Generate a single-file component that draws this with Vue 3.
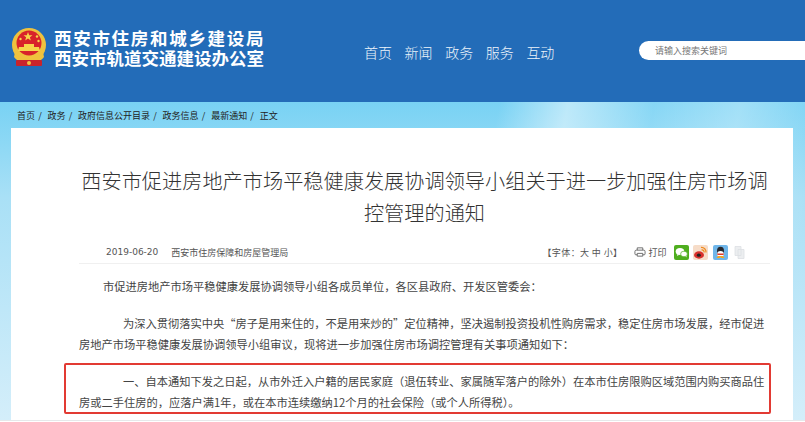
<template>
  <div class="page">
    <header class="top">
      <div class="brand">
        <svg class="emblem" viewBox="0 0 36 40" width="36" height="40">
          <circle cx="18" cy="17" r="17" fill="#efc23e" />
          <circle cx="18" cy="15" r="12.5" fill="#d8232a" />
          <path d="M17 4l1.2 3.2 3.3.1-2.6 2 .9 3.2-2.8-1.9-2.8 1.9.9-3.2-2.6-2 3.3-.1z" fill="#f7d54a" />
          <circle cx="9.5" cy="11" r="1.2" fill="#f7d54a" />
          <circle cx="26" cy="8.5" r="1.2" fill="#f7d54a" />
          <circle cx="27.5" cy="13" r="1.2" fill="#f7d54a" />
          <path d="M8 19h20l1 4H7z" fill="#f7d54a" />
          <path d="M13 19v-3h10v3z" fill="#f7d54a" />
          <path d="M4 24c3 5 8 7 14 7s11-2 14-7l1 5c-3 4-9 6-15 6s-12-2-15-6z" fill="#efc23e" />
          <rect x="5" y="32" width="26" height="6" rx="1" fill="#c9232b" />
          <circle cx="18" cy="35" r="2" fill="#efc23e" />
        </svg>
        <div class="brand-name">
          <div class="name-a">西安市住房和城乡建设局</div>
          <div class="name-b">西安市轨道交通建设办公室</div>
        </div>
      </div>
      <nav class="nav">
        <a v-for="item in navItems" :key="item">{{ item }}</a>
      </nav>
      <div class="search">请输入搜索关键词</div>
    </header>

    <div class="band">
      <div class="crumbs">
        <template v-for="(c, i) in crumbs" :key="c">
          <span>{{ c }}</span>
          <i v-if="i < crumbs.length - 1">/</i>
        </template>
      </div>

      <main class="card">
        <h1>西安市促进房地产市场平稳健康发展协调领导小组关于进一步加强住房市场调控管理的通知</h1>

        <div class="meta">
          <span class="date">2019-06-20</span>
          <span class="source">西安市住房保障和房屋管理局</span>
          <span class="font-size">【字体：大 中 小】</span>
          <svg class="printer" viewBox="0 0 13 12" width="12" height="12">
            <path d="M3.500 4V1.500h6V4M3.500 9H2a1 1 0 0 1-1-1V5.500a1.500 1.500 0 0 1 1.500-1.500h8A1.500 1.500 0 0 1 12 5.500V8a1 1 0 0 1-1 1H9.500M3.500 7.500h6v3h-6z" fill="none" stroke="#666" stroke-width="1" />
          </svg>
          <span class="print">打印</span>
          <svg class="share" viewBox="0 0 15 15" width="15" height="15">
            <rect width="15" height="15" rx="2" fill="#4fae1f" />
            <ellipse cx="6" cy="6.500" rx="4.300" ry="3.500" fill="#fff" />
            <path d="M3.500 9l-.5 2 2.200-1.200z" fill="#fff" />
            <ellipse cx="10" cy="9" rx="3.400" ry="2.800" fill="#fff" stroke="#4fae1f" stroke-width=".7" />
            <path d="M11.500 11l1 1.500-.1-2z" fill="#fff" />
          </svg>
          <svg class="share" viewBox="0 0 15 15" width="15" height="15">
            <rect width="15" height="15" rx="2" fill="#f6dcc8" />
            <ellipse cx="6" cy="10" rx="5" ry="3.700" fill="#d8302c" />
            <ellipse cx="5.800" cy="10.200" rx="2" ry="1.600" fill="#222" />
            <path d="M8 2.500a4.500 4.500 0 0 1 5 5M8.500 5a2 2 0 0 1 2.500 2.500" fill="none" stroke="#ef8a1e" stroke-width="1.200" />
          </svg>
          <svg class="share" viewBox="0 0 15 15" width="15" height="15">
            <rect width="15" height="15" rx="2" fill="#6fb6ea" />
            <ellipse cx="7.500" cy="6" rx="3.500" ry="4.200" fill="#26282e" />
            <ellipse cx="7.500" cy="9" rx="3.300" ry="3" fill="#fff" />
            <path d="M4 8.500h7l-.5 1.500h-6z" fill="#e23a2b" />
            <path d="M3.500 13h3l1-1 1 1h3l-1.500-2h-5z" fill="#f4a51f" />
          </svg>
          <svg class="share" viewBox="0 0 15 15" width="15" height="15">
            <path d="M3 1.500h6v9H3zM6 4.500h6v9H6z" fill="#eceef0" stroke="#dde0e3" stroke-width=".8" />
          </svg>
        </div>

        <p class="first">市促进房地产市场平稳健康发展协调领导小组各成员单位，各区县政府、开发区管委会：</p>
        <p class="indent">为深入贯彻落实中央“房子是用来住的，不是用来炒的”定位精神，坚决遏制投资投机性购房需求，稳定住房市场发展，经市促进房地产市场平稳健康发展协调领导小组审议，现将进一步加强住房市场调控管理有关事项通知如下：</p>
        <p class="indent marked">一、自本通知下发之日起，从市外迁入户籍的居民家庭（退伍转业、家属随军落户的除外）在本市住房限购区域范围内购买商品住房或二手住房的，应落户满1年，或在本市连续缴纳12个月的社会保险（或个人所得税）。</p>
      </main>
    </div>
  </div>
</template>

<script setup>
const navItems = ['首页', '新闻', '政务', '服务', '互动']
const crumbs = ['首页', '政务', '政府信息公开目录', '政务信息', '最新通知', '正文']
</script>

<style>
html, body {
  margin: 0;
  background: #fff;
}
</style>

<style scoped>
.page {
  width: 805px;
  height: 422px;
  overflow: hidden;
  font-family: "Noto Sans CJK SC", "Liberation Sans", sans-serif;
  color: #444;
}

.top {
  height: 102px;
  background: #236cb8;
  display: flex;
  align-items: flex-start;
  box-sizing: border-box;
  padding-top: 28px;
}

.brand {
  display: flex;
  align-items: center;
  gap: 7px;
  margin-left: 11px;
  width: 353px;
}

.emblem {
  flex: none;
}

.brand-name {
  color: #fff;
  font-weight: 700;
  font-size: 17.500px;
  line-height: 20px;
  margin-top: -1px;
}

.name-a {
  letter-spacing: 1.700px;
}

.nav {
  display: flex;
  gap: 12.600px;
  margin-top: 14px;
  color: #eef5fb;
  font-size: 14px;
  line-height: 20px;
  font-weight: 300;
}

.search {
  margin-left: auto;
  margin-top: 13px;
  width: 150px;
  height: 19px;
  padding-left: 16px;
  background: #fff;
  border-radius: 10px 0 0 10px;
  color: #777;
  font-size: 9px;
  line-height: 19px;
}

.band {
  height: 318px;
  border-bottom: 1px solid #e6e8ea;
  background:
    linear-gradient(100deg, rgba(255, 255, 255, 0) 58%, rgba(255, 255, 255, 0.5) 66%, rgba(255, 255, 255, 0.1) 76%, rgba(255, 255, 255, 0.3) 86%, rgba(255, 255, 255, 0) 96%),
    linear-gradient(#78d2f4, #a9e0f6 30%, #d4eefa);
}

.crumbs {
  height: 26px;
  padding-left: 17px;
  display: flex;
  align-items: center;
  font-size: 9px;
  color: #222;
}

.crumbs i {
  font-style: normal;
  margin: 0 5.800px 0 3.200px;
}

.card {
  margin: 0 12px 0 11px;
  height: 292px;
  padding: 37px 23px 0 68px;
  background: #fff;
  box-sizing: border-box;
}

h1 {
  margin: 0;
  text-align: center;
  font-size: 20.200px;
  line-height: 32px;
  font-weight: 300;
  color: #333;
}

.meta {
  margin-top: 12px;
  height: 22px;
  display: flex;
  align-items: center;
  border-bottom: 1px solid #f0f0f0;
  font-size: 9px;
  color: #555;
}

.date {
  margin-left: 27px;
  font-family: "DejaVu Sans", sans-serif;
  font-size: 9px;
}

.source {
  margin-left: 13px;
}

.font-size {
  margin-left: auto;
  letter-spacing: 0.400px;
}

.printer {
  margin-left: 12px;
}

.print {
  margin-left: 2px;
  margin-right: 2.500px;
}

.share {
  margin-left: 4.500px;
}

.share:last-child {
  margin-right: 23px;
}

p {
  margin: 0;
  font-size: 11.250px;
  line-height: 21px;
  color: #444;
}

.first {
  margin-top: 12px;
  text-indent: 24px;
}

.indent {
  margin-top: 16px;
  text-indent: 44px;
}

.marked {
  position: relative;
}

.marked::after {
  content: "";
  position: absolute;
  left: -15px;
  right: -1px;
  top: -8px;
  bottom: -1px;
  border: 2px solid #e23a33;
  border-radius: 2px;
}
</style>
